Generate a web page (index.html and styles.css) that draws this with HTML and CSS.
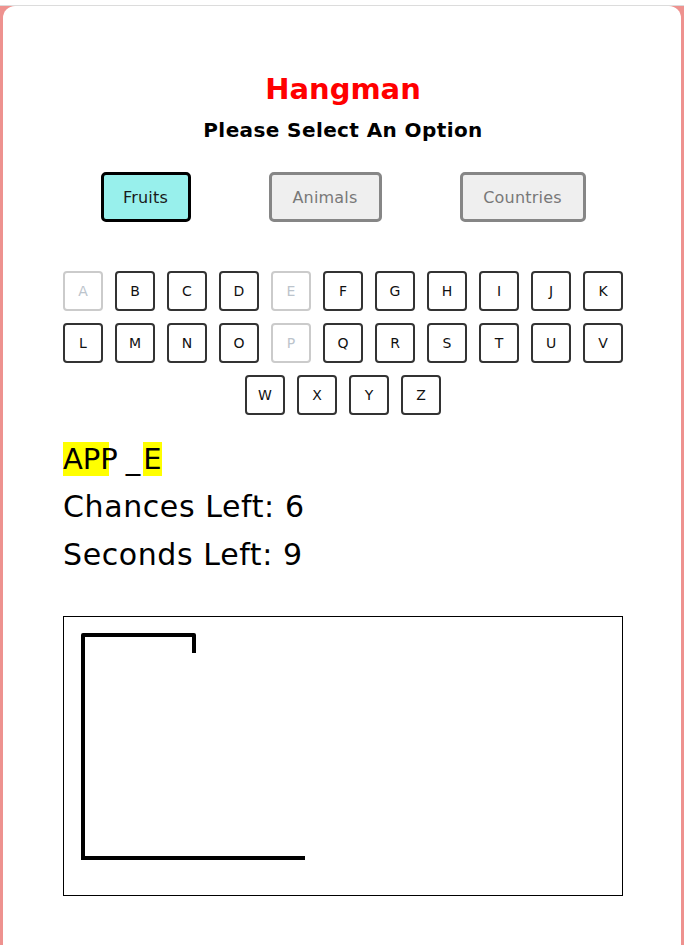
FILE: index.html
```html
<!DOCTYPE html>
<html lang="en">
<head>
<meta charset="utf-8">
<title>Hangman</title>
<link rel="stylesheet" href="styles.css">
</head>
<body>
<div class="page">
  <main class="card">
    <h1 class="title">Hangman</h1>
    <h2 class="subtitle">Please Select An Option</h2>
    <div class="options">
      <button class="opt opt-active">Fruits</button>
      <button class="opt opt-disabled">Animals</button>
      <button class="opt opt-disabled">Countries</button>
    </div>
    <div class="keys">
      <button class="key key-used">A</button>
      <button class="key">B</button>
      <button class="key">C</button>
      <button class="key">D</button>
      <button class="key key-used">E</button>
      <button class="key">F</button>
      <button class="key">G</button>
      <button class="key">H</button>
      <button class="key">I</button>
      <button class="key">J</button>
      <button class="key">K</button>
      <button class="key">L</button>
      <button class="key">M</button>
      <button class="key">N</button>
      <button class="key">O</button>
      <button class="key key-used">P</button>
      <button class="key">Q</button>
      <button class="key">R</button>
      <button class="key">S</button>
      <button class="key">T</button>
      <button class="key">U</button>
      <button class="key">V</button>
      <button class="key">W</button>
      <button class="key">X</button>
      <button class="key">Y</button>
      <button class="key">Z</button>
    </div>
    <div class="word"><span class="hl hl-part">APP</span><span class="blank">_</span><span class="hl">E</span></div>
    <div class="stat">Chances Left: 6</div>
    <div class="stat">Seconds Left: 9</div>
    <div class="board">
      <svg class="gallows" width="558" height="278" viewBox="0 0 558 278">
        <path d="M19 241 L19 18 L130 18 L130 36" fill="none" stroke="#000" stroke-width="4" stroke-linejoin="round"/>
        <path d="M17 241 L241 241" fill="none" stroke="#000" stroke-width="4"/>
      </svg>
    </div>
  </main>
</div>
</body>
</html>
```

FILE: styles.css
```css
html, body {
  margin: 0;
  padding: 0;
  background: #fff;
}

body {
  font-family: "DejaVu Sans", "Open Sans", sans-serif;
  color: #000;
}

.page {
  margin-top: 5px;
  border-top: 1px solid #dcdcdc;
  background: #ee928f;
  padding: 0 3px;
  height: 939px;
  overflow: hidden;
}

.card {
  background: #fff;
  border-radius: 12px 12px 0 0;
  height: 1000px;
  padding: 63px 58px 0 60px;
  box-sizing: border-box;
}

.title {
  margin: 0;
  font-size: 29px;
  line-height: 40px;
  font-weight: 700;
  color: #ff0000;
  text-align: center;
}

.subtitle {
  margin: 6px 0 0;
  font-size: 20px;
  line-height: 30px;
  font-weight: 700;
  letter-spacing: 0.4px;
  text-align: center;
}

.options {
  display: flex;
  justify-content: center;
  gap: 78px;
  margin-top: 27px;
}

.opt {
  height: 50px;
  box-sizing: border-box;
  border-radius: 5px;
  border: 3px solid #000;
  font-family: inherit;
  font-size: 16px;
  letter-spacing: 0.2px;
  padding: 0;
  cursor: pointer;
}

.opt-active {
  background: #98f0ec;
  border-color: #000;
  color: #1a1a1a;
  width: 90px;
}

.opt-disabled {
  background: #efefef;
  border-color: #868686;
  color: #787878;
}

.opt-disabled:nth-child(2) {
  width: 113px;
}

.opt-disabled:nth-child(3) {
  width: 126px;
}

.keys {
  display: flex;
  flex-wrap: wrap;
  justify-content: center;
  gap: 12px;
  width: 560px;
  margin-top: 49px;
}

.key {
  width: 40px;
  height: 40px;
  box-sizing: border-box;
  background: #fff;
  border: 2px solid #333;
  border-radius: 4px;
  font-family: inherit;
  font-size: 14px;
  color: #111;
  padding: 0;
}

.key-used {
  border-color: #cbcbcb;
  color: #bcc4cc;
}

.word {
  margin-top: 20px;
  font-size: 29px;
  line-height: 48px;
  height: 48px;
}

.hl {
  background: #ffff00;
}

.hl-part {
  background: linear-gradient(to right, #ffff00 0, #ffff00 46px, transparent 46px);
}

.blank {
  margin: 0 3px 0 8px;
}

.stat {
  font-size: 30px;
  letter-spacing: 0.6px;
  line-height: 48px;
}

.board {
  margin-top: 37px;
  width: 560px;
  height: 280px;
  box-sizing: border-box;
  border: 1px solid #000;
}

.gallows {
  display: block;
}
```
